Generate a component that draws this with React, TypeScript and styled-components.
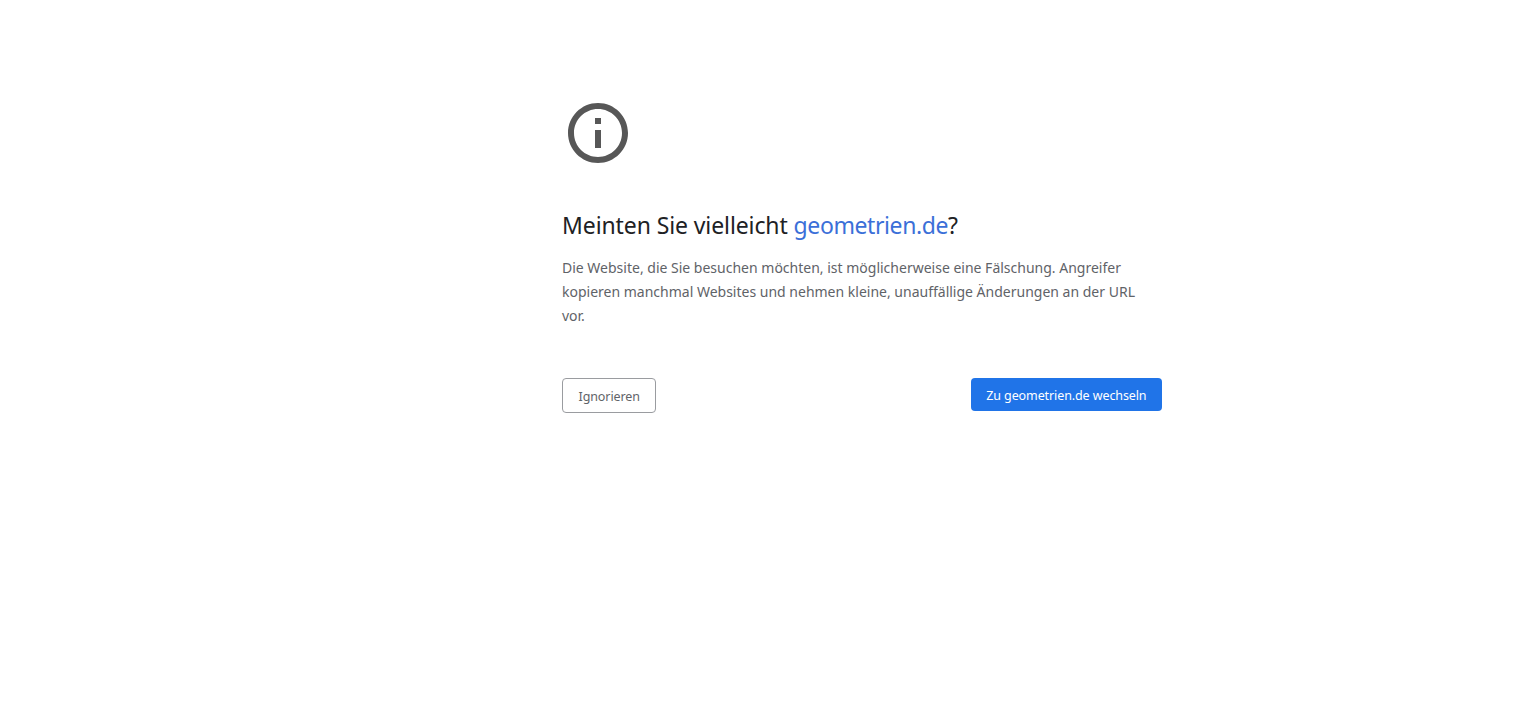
import { createGlobalStyle, styled } from "styled-components";

const GlobalStyle = createGlobalStyle`
  html, body {
    margin: 0;
    background: #fff;
    font-family: "Noto Sans", "Open Sans", "Liberation Sans", sans-serif;
  }
`;

const Page = styled.main`
  box-sizing: border-box;
  width: 600px;
  min-height: 711px;
  margin-left: 562px;
  padding-top: 97px;
`;

const InfoIcon = styled.svg`
  display: block;
  width: 72px;
  height: 72px;
  fill: #575757;
`;

const Heading = styled.h1`
  margin: 38px 0 0;
  height: 36px;
  font-size: 23px;
  font-weight: 400;
  line-height: 36px;
  letter-spacing: -0.1px;
  color: #202124;
`;

const SuggestedLink = styled.a`
  color: #3b6fd8;
  letter-spacing: -0.4px;
  text-decoration: none;
`;

const Message = styled.p`
  max-width: 590px;
  margin: 13px 0 0;
  font-size: 14px;
  line-height: 24px;
  color: #5f6368;
`;

const Actions = styled.div`
  display: flex;
  justify-content: space-between;
  align-items: flex-start;
  margin-top: 50px;
`;

const Button = styled.button<{ $primary?: boolean }>`
  box-sizing: border-box;
  height: ${(p) => (p.$primary ? "33px" : "35px")};
  padding: 1px ${(p) => (p.$primary ? "15.5px" : "15.5px")} 0;
  border: ${(p) => (p.$primary ? "none" : "1px solid #9a9ca0")};
  border-radius: 4px;
  background: ${(p) => (p.$primary ? "#2074e8" : "#fff")};
  color: ${(p) => (p.$primary ? "#fff" : "#5f6368")};
  font-family: inherit;
  font-size: 12.5px;
  letter-spacing: -0.1px;
`;

export default function App() {
  return (
    <>
      <GlobalStyle />
      <Page>
        <InfoIcon viewBox="0 0 24 24" aria-hidden="true">
          <path d="M11 7h2v2h-2zm0 4h2v6h-2zm1-9C6.48 2 2 6.48 2 12s4.48 10 10 10 10-4.48 10-10S17.52 2 12 2zm0 18c-4.41 0-8-3.59-8-8s3.59-8 8-8 8 3.59 8 8-3.59 8-8 8z" />
        </InfoIcon>
        <Heading>
          Meinten Sie vielleicht <SuggestedLink href="#">geometrien.de</SuggestedLink>?
        </Heading>
        <Message>
          Die Website, die Sie besuchen möchten, ist möglicherweise eine Fälschung. Angreifer
          kopieren manchmal Websites und nehmen kleine, unauffällige Änderungen an der URL vor.
        </Message>
        <Actions>
          <Button>Ignorieren</Button>
          <Button $primary>Zu geometrien.de wechseln</Button>
        </Actions>
      </Page>
    </>
  );
}
